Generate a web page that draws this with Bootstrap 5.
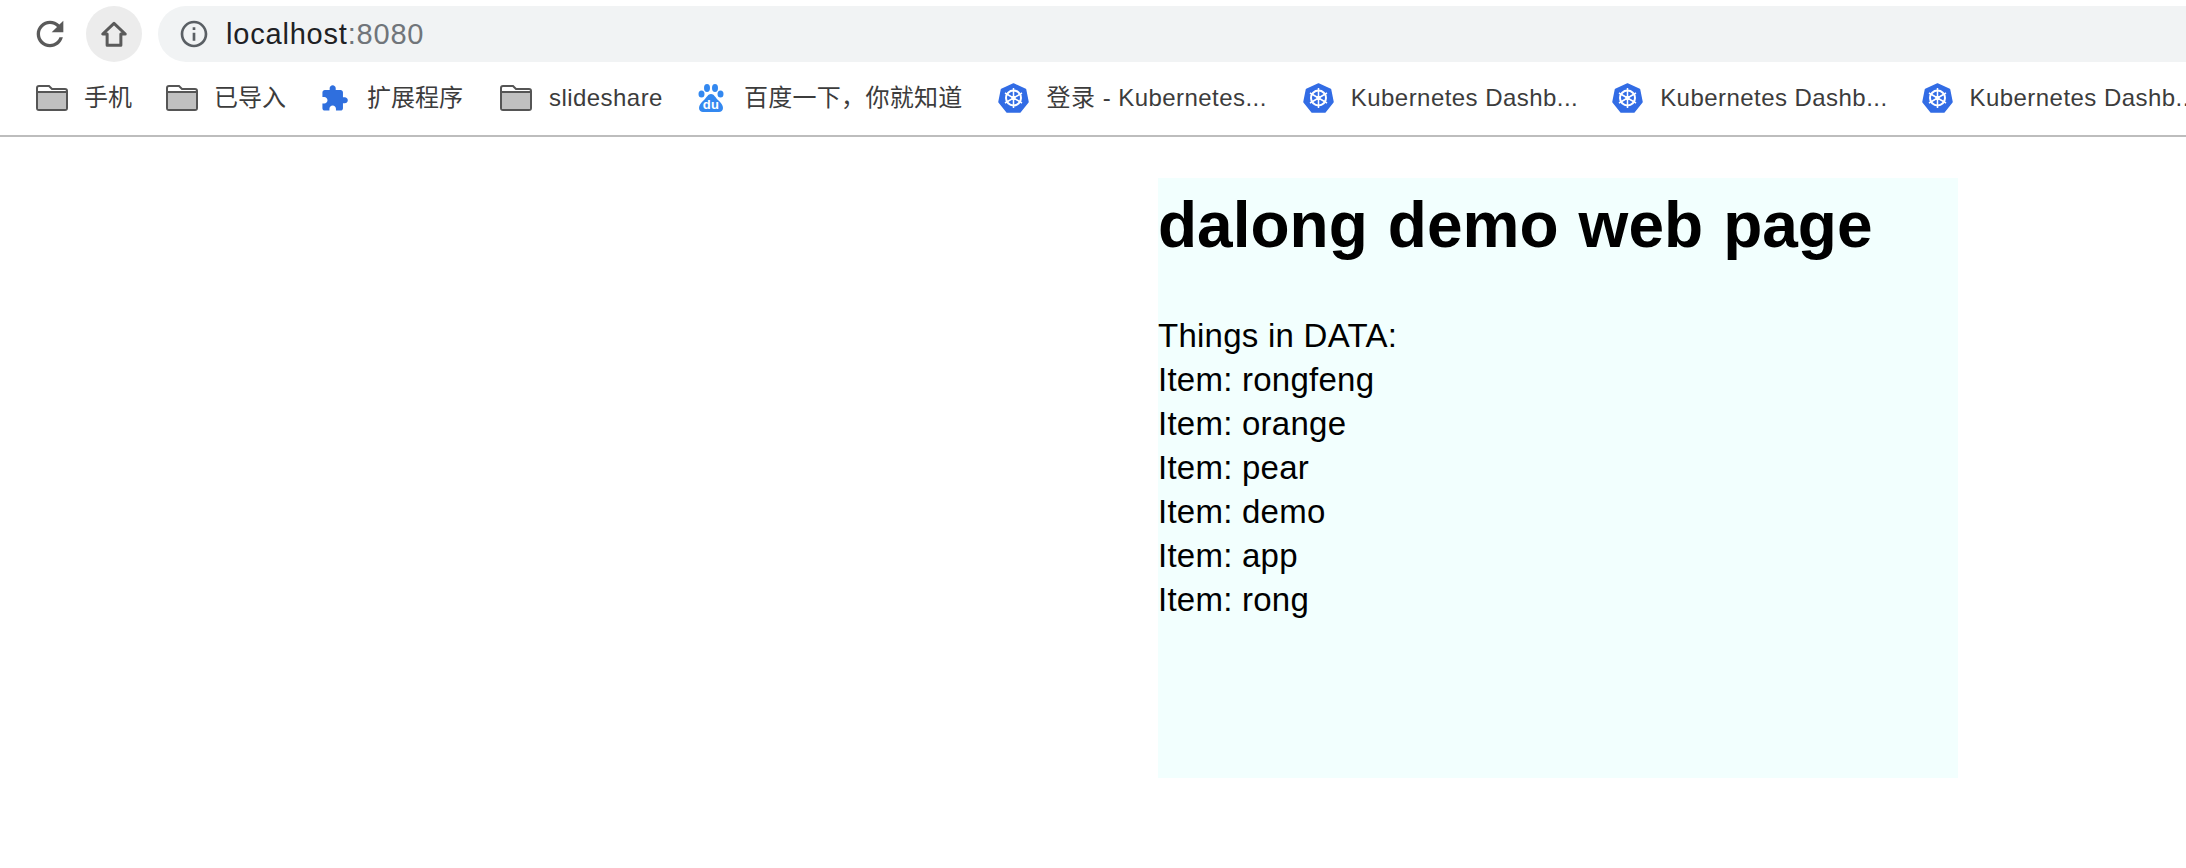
<!DOCTYPE html>
<html lang="en">
<head>
  <meta charset="UTF-8" />
  <meta name="viewport" content="width=device-width, initial-scale=1" />
  <title>dalong demo web page</title>
  <link href="https://cdn.jsdelivr.net/npm/bootstrap@5.3.3/dist/css/bootstrap.min.css" rel="stylesheet" />
  <style>
    body {
      background: #fff;
      color: #000;
      font-family: "Liberation Sans", "Noto Sans CJK SC", sans-serif;
      overflow: hidden;
    }

    .browser-chrome {
      height: 137px;
      border-bottom: 2px solid #bdbdbd;
      overflow: hidden;
    }

    .tool-row {
      height: 68px;
      padding-left: 22px;
    }

    .tool-btn {
      width: 56px;
      height: 56px;
      border-radius: 50%;
    }

    .tool-btn.is-hover {
      background: #ececec;
      margin-left: 8px;
    }

    .omnibox {
      margin-left: 16px;
      flex: 1;
      height: 56px;
      background: #f1f3f4;
      border-radius: 28px 0 0 28px;
      padding-left: 20px;
      gap: 16px;
      font-size: 29px;
      letter-spacing: .8px;
      color: #202124;
    }

    .omnibox-text {
      padding-top: 2px;
    }

    .omnibox-port {
      color: #70757a;
    }

    .mark-row {
      height: 60px;
      padding-left: 36px;
      gap: 34px;
      white-space: nowrap;
    }

    .mark-item {
      gap: 17px;
      font-size: 24px;
      color: #3c3c3c;
      flex: none;
    }

    .mark-item svg {
      flex: none;
    }

    .mark-tight {
      gap: 16px;
    }

    .mark-puzzle {
      gap: 18px;
      margin-right: 3px;
    }

    .mark-latin {
      letter-spacing: .45px;
    }

    .mark-baidu {
      letter-spacing: .3px;
      margin-right: 1px;
    }

    .mark-login {
      gap: 18px;
      margin-right: 2px;
    }

    .data-panel {
      width: 800px;
      height: 600px;
      margin: 41px 0 0 1158px;
      background: #f2fffe;
    }

    .data-panel h1 {
      font-size: 64px;
      font-weight: 700;
      word-spacing: 2.300px;
      line-height: 74px;
      margin: 0;
      padding: 10px 0 52px;
    }

    .data-line {
      font-size: 33px;
      letter-spacing: .25px;
      line-height: 44px;
    }
  </style>
</head>
<body>
  <svg width="0" height="0" class="d-block">
    <defs>
      <symbol id="ic-folder" viewBox="0 0 32 26">
        <path d="M1 23V3a2 2 0 0 1 2-2h10l3 3h13a2 2 0 0 1 2 2v17a2 2 0 0 1-2 2H3a2 2 0 0 1-2-2z" fill="#fff" stroke="#555" stroke-width="2"/>
        <path d="M2 8h28v16H2z" fill="#c0c0c0"/>
        <path d="M1 7h30" stroke="#555" stroke-width="2"/>
      </symbol>
      <symbol id="ic-k8s" viewBox="0 0 31 30">
        <path d="M15.500 1l12 5.500 2.500 12.500-8 10H9L1 19 3.500 6.500z" fill="#326ce5" stroke="#326ce5" stroke-width="1.500" stroke-linejoin="round"/>
        <g fill="none" stroke="#fff" stroke-width="2">
          <circle cx="15.500" cy="15" r="7.500"/>
          <path d="M15.500 5v20M7 10l17 10M24 10L7 20" stroke-width="1.500"/>
        </g>
        <circle cx="15.500" cy="15" r="2.200" fill="#fff"/>
      </symbol>
    </defs>
  </svg>

  <header class="browser-chrome">
    <div class="tool-row d-flex align-items-center">
      <span class="tool-btn d-flex align-items-center justify-content-center">
        <svg width="40" height="40" viewBox="0 0 24 24" fill="#5a5a5a"><path d="M17.650 6.350C16.200 4.900 14.210 4 12 4c-4.420 0-7.990 3.580-7.990 8s3.570 8 7.990 8c3.730 0 6.840-2.550 7.730-6h-2.080c-.82 2.330-3.040 4-5.650 4-3.310 0-6-2.690-6-6s2.690-6 6-6c1.660 0 3.140.69 4.220 1.780L13 11h7V4l-2.350 2.350z"/></svg>
      </span>
      <span class="tool-btn is-hover d-flex align-items-center justify-content-center">
        <svg width="30" height="30" viewBox="0 0 24 24" fill="none" stroke="#5a5a5a" stroke-width="2.400" stroke-linejoin="round"><path d="M12 3.500L3 12H6.500V21H17.500V12H21Z"/></svg>
      </span>
      <div class="omnibox d-flex align-items-center">
        <svg width="32" height="32" viewBox="0 0 24 24" fill="#5a5f64"><path d="M11 7h2v2h-2zm0 4h2v6h-2zm1-9C6.480 2 2 6.480 2 12s4.480 10 10 10 10-4.480 10-10S17.520 2 12 2zm0 18c-4.410 0-8-3.590-8-8s3.590-8 8-8 8 3.590 8 8-3.590 8-8 8z"/></svg>
        <span class="omnibox-text">localhost<span class="omnibox-port">:8080</span></span>
      </div>
    </div>
    <nav class="mark-row d-flex align-items-center">
      <span class="mark-item mark-tight d-flex align-items-center"><svg width="32" height="26"><use href="#ic-folder"/></svg>手机</span>
      <span class="mark-item mark-tight d-flex align-items-center"><svg width="32" height="26"><use href="#ic-folder"/></svg>已导入</span>
      <span class="mark-item mark-puzzle d-flex align-items-center">
        <svg width="29" height="29" viewBox="0 0 24 24" fill="#2f6fde"><path d="M20.500 11H19V7c0-1.100-.9-2-2-2h-4V3.500C13 2.120 11.880 1 10.500 1S8 2.120 8 3.500V5H4c-1.100 0-1.990.9-1.990 2v3.800H3.500c1.490 0 2.700 1.210 2.700 2.700s-1.210 2.700-2.700 2.700H2V20c0 1.100.9 2 2 2h3.800v-1.500c0-1.490 1.210-2.700 2.700-2.700 1.490 0 2.700 1.210 2.700 2.700V22H17c1.100 0 2-.9 2-2v-4h1.500c1.380 0 2.500-1.120 2.500-2.500S21.880 11 20.500 11z"/></svg>扩展程序</span>
      <span class="mark-item mark-latin d-flex align-items-center"><svg width="32" height="26"><use href="#ic-folder"/></svg>slideshare</span>
      <span class="mark-item mark-baidu d-flex align-items-center">
        <svg width="30" height="28" viewBox="0 0 30 28" fill="#3388f0"><ellipse cx="4.500" cy="10" rx="3" ry="3.500"/><ellipse cx="10" cy="4" rx="3" ry="4"/><ellipse cx="18" cy="4" rx="3" ry="4"/><ellipse cx="23.500" cy="10" rx="3" ry="3.500"/><path d="M14 10c-3 0-4 3-7 6-3 3-5 5-5 8 0 2.500 2 4 4 4h16c2 0 4-1.500 4-4 0-3-2-5-5-8-3-3-4-6-7-6z"/><text x="14" y="25" text-anchor="middle" font-size="13" font-weight="700" fill="#fff" font-family="Liberation Sans, sans-serif">du</text></svg>百度一下，你就知道</span>
      <span class="mark-item mark-latin mark-login d-flex align-items-center"><svg width="31" height="30"><use href="#ic-k8s"/></svg>登录 - Kubernetes...</span>
      <span class="mark-item mark-latin d-flex align-items-center"><svg width="31" height="30"><use href="#ic-k8s"/></svg>Kubernetes Dashb...</span>
      <span class="mark-item mark-latin d-flex align-items-center"><svg width="31" height="30"><use href="#ic-k8s"/></svg>Kubernetes Dashb...</span>
      <span class="mark-item mark-latin d-flex align-items-center"><svg width="31" height="30"><use href="#ic-k8s"/></svg>Kubernetes Dashb...</span>
    </nav>
  </header>

  <main class="data-panel">
    <h1>dalong demo web page</h1>
    <div class="data-line">Things in DATA:</div>
    <div class="data-line">Item: rongfeng</div>
    <div class="data-line">Item: orange</div>
    <div class="data-line">Item: pear</div>
    <div class="data-line">Item: demo</div>
    <div class="data-line">Item: app</div>
    <div class="data-line">Item: rong</div>
  </main>
</body>
</html>
